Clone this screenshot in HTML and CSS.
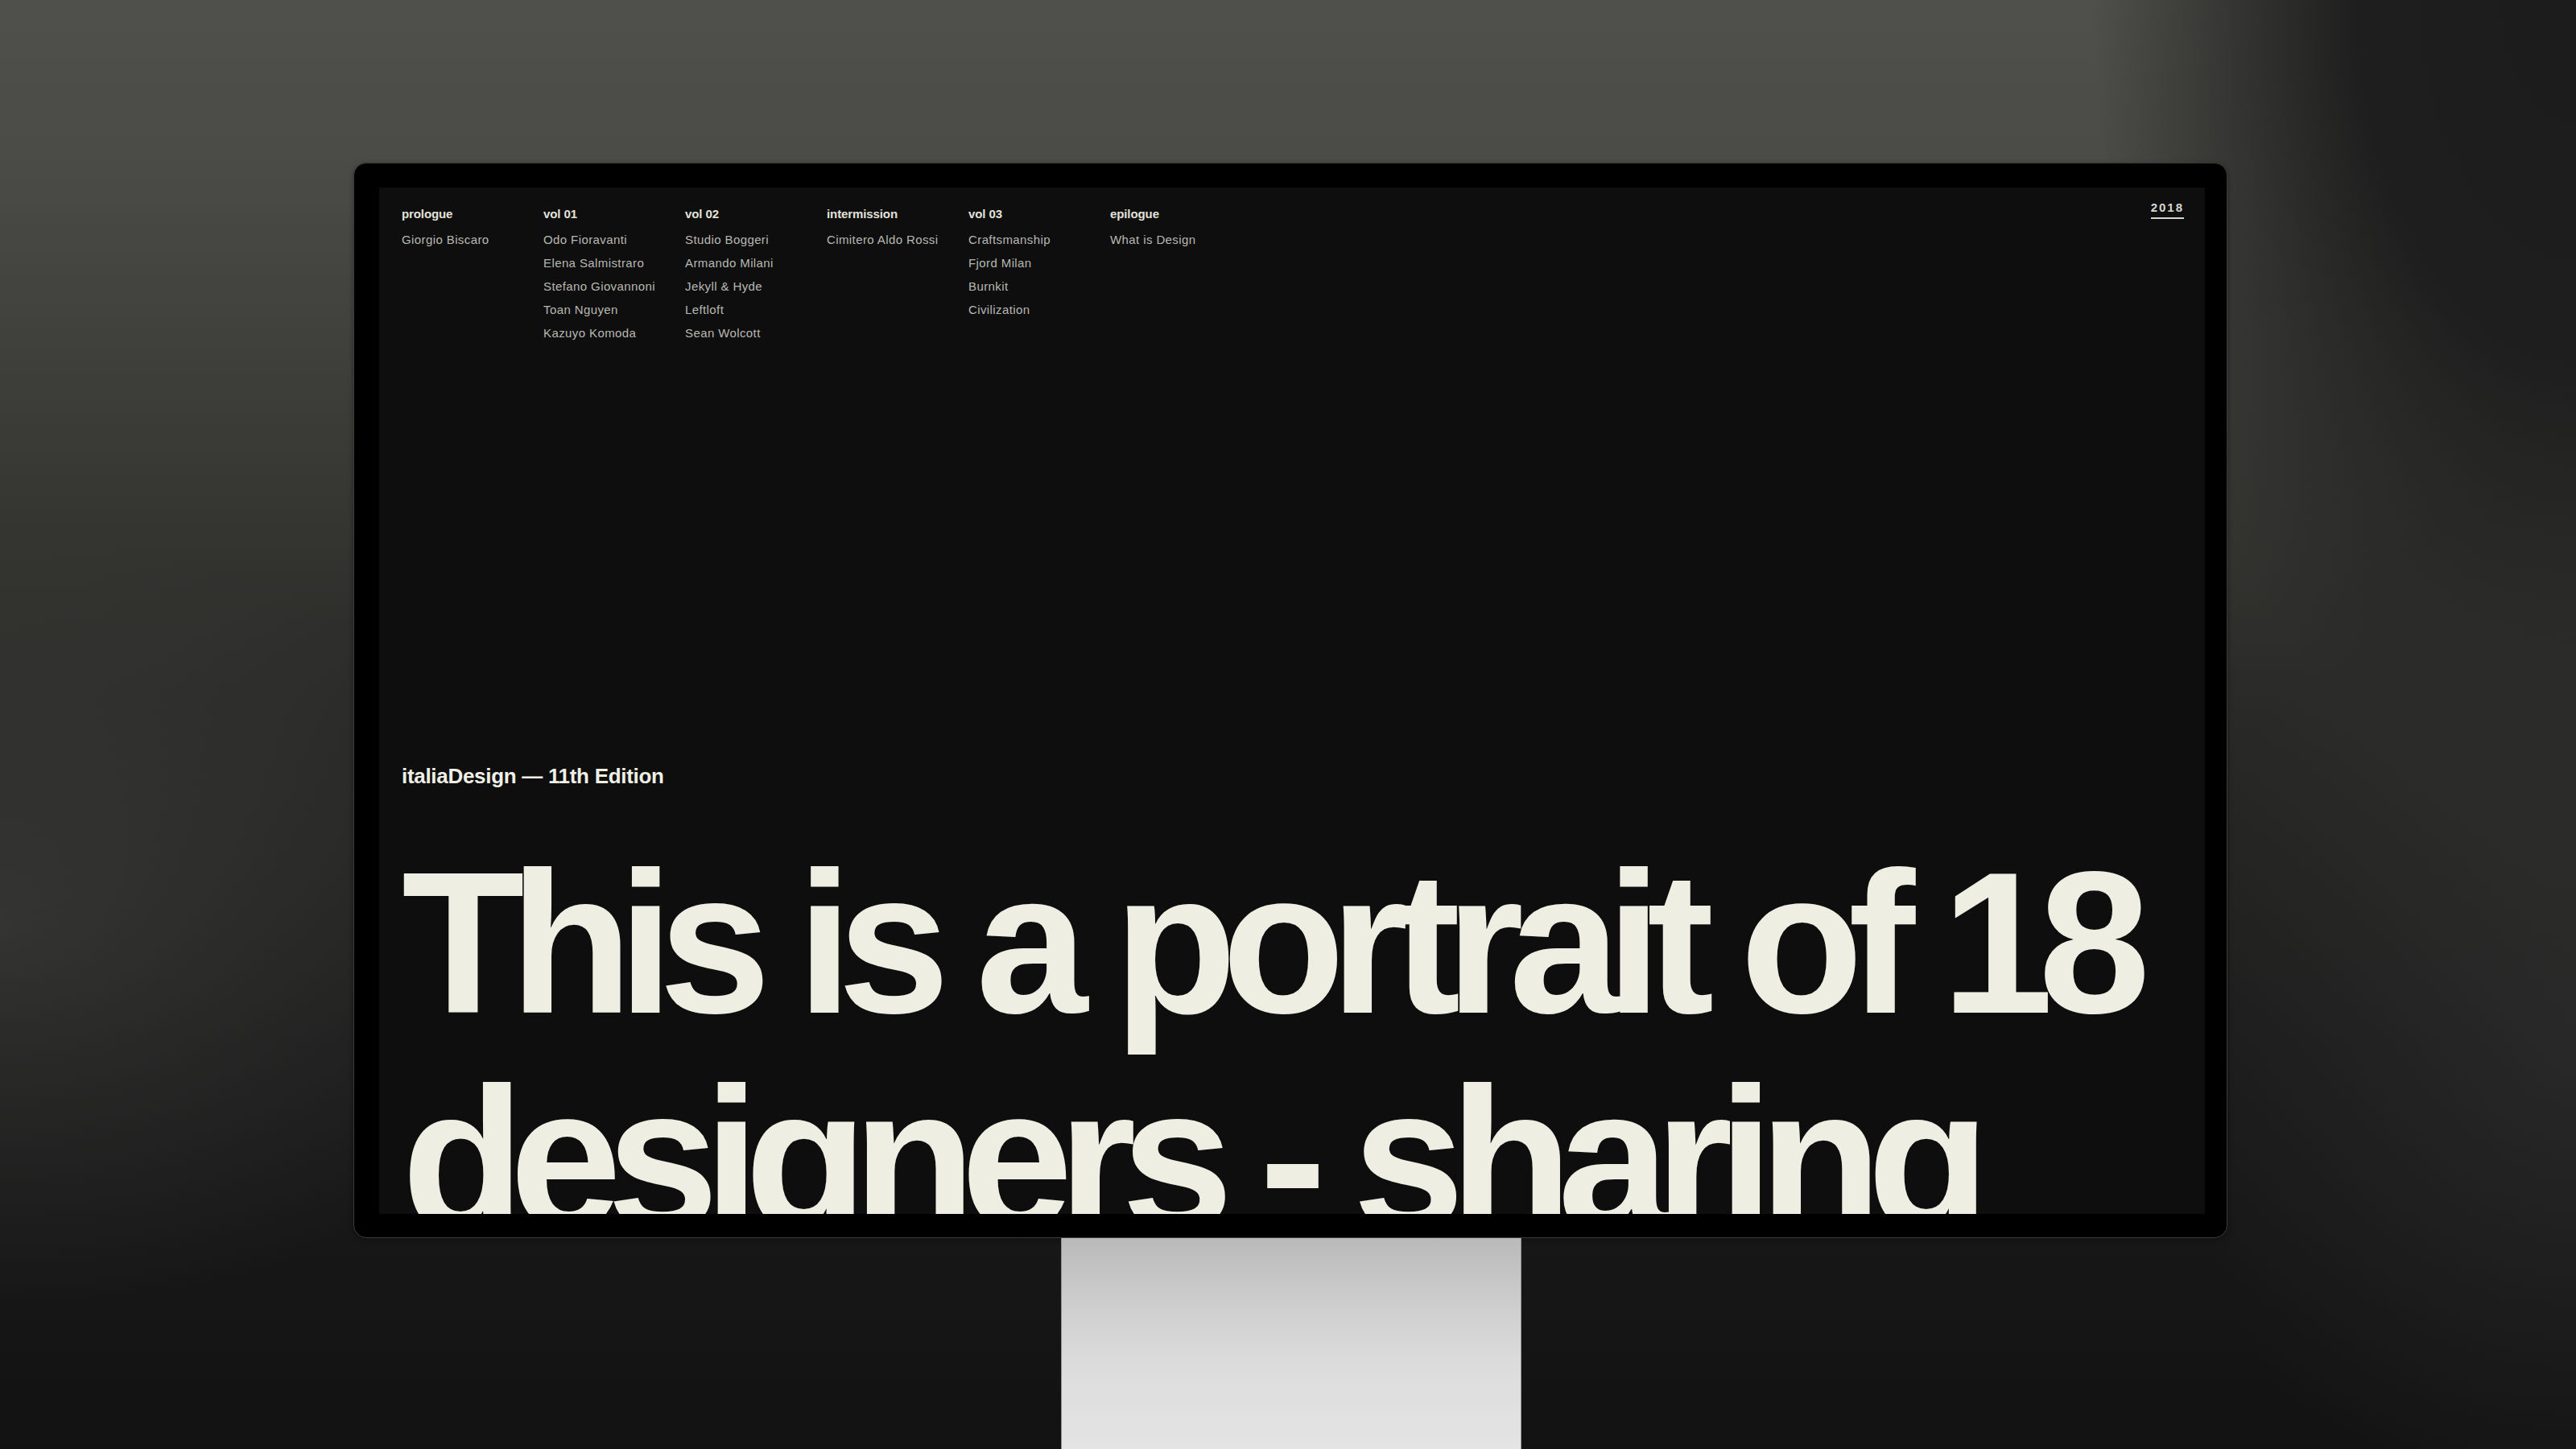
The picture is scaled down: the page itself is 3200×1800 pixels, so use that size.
FILE: index.html
```html
<!DOCTYPE html>
<html lang="en">
<head>
<meta charset="utf-8">
<title>italiaDesign — 11th Edition</title>
<link rel="stylesheet" href="styles.css">
</head>
<body>
<div class="stage">
  <div class="monitor">
    <div class="screen">
      <header class="topbar">
        <nav class="toc">
          <div class="toc-col">
            <h3 class="toc-title">prologue</h3>
            <ul class="toc-list"><li>Giorgio Biscaro</li></ul>
          </div>
          <div class="toc-col">
            <h3 class="toc-title">vol 01</h3>
            <ul class="toc-list">
              <li>Odo Fioravanti</li>
              <li>Elena Salmistraro</li>
              <li>Stefano Giovannoni</li>
              <li>Toan Nguyen</li>
              <li>Kazuyo Komoda</li>
            </ul>
          </div>
          <div class="toc-col">
            <h3 class="toc-title">vol 02</h3>
            <ul class="toc-list">
              <li>Studio Boggeri</li>
              <li>Armando Milani</li>
              <li>Jekyll &amp; Hyde</li>
              <li>Leftloft</li>
              <li>Sean Wolcott</li>
            </ul>
          </div>
          <div class="toc-col">
            <h3 class="toc-title">intermission</h3>
            <ul class="toc-list"><li>Cimitero Aldo Rossi</li></ul>
          </div>
          <div class="toc-col">
            <h3 class="toc-title">vol 03</h3>
            <ul class="toc-list">
              <li>Craftsmanship</li>
              <li>Fjord Milan</li>
              <li>Burnkit</li>
              <li>Civilization</li>
            </ul>
          </div>
          <div class="toc-col">
            <h3 class="toc-title">epilogue</h3>
            <ul class="toc-list"><li>What is Design</li></ul>
          </div>
        </nav>
        <span class="year">2018</span>
      </header>
      <p class="kicker">italiaDesign — 11th Edition</p>
      <h1 class="headline">This is a portrait of 18 designers - sharing</h1>
    </div>
  </div>
  <div class="stand"></div>
</div>
</body>
</html>
```
FILE: styles.css
```css
* { box-sizing: border-box; }

html, body {
  margin: 0;
  padding: 0;
}

body {
  width: 3200px;
  height: 1800px;
  overflow: hidden;
  font-family: "Liberation Sans", Arial, sans-serif;
  background:
    radial-gradient(ellipse 900px 650px at 0% 64%, rgba(95, 95, 92, 0.30), rgba(95, 95, 92, 0) 75%),
    radial-gradient(ellipse 650px 900px at 100% 72%, rgba(85, 85, 85, 0.22), rgba(85, 85, 85, 0) 75%),
    radial-gradient(ellipse 600px 1000px at 100% 0%, #1c1c1c 0%, #1e1e1e 45%, rgba(30, 30, 30, 0) 100%),
    linear-gradient(to bottom, #4f4f4b 0%, #4a4a46 12%, #3a3a37 30%, #2a2a28 48%, #1c1c1c 72%, #121212 100%);
}

.stage {
  display: flex;
  flex-direction: column;
  align-items: flex-start;
  height: 1800px;
  padding: 202px 0 0 439px;
}

.monitor {
  width: 2328px;
  height: 1336px;
  padding: 30px 27px 29px 31px;
  background: #000;
  border: 1px solid #3b3b3b;
  border-radius: 16px;
  box-shadow: 0 2px 6px rgba(0, 0, 0, 0.35);
}

.screen {
  width: 2268px;
  height: 1275px;
  overflow: hidden;
  background: #0e0e0e;
  padding: 18px 26px 0 28px;
}

.topbar {
  display: flex;
  align-items: flex-start;
}

.toc {
  display: flex;
}

.toc-col {
  width: 176px;
}

.toc-title {
  margin: 0 0 3px;
  font-size: 15px;
  line-height: 29px;
  font-weight: 700;
  letter-spacing: -0.1px;
  color: #e2e2da;
}

.toc-list {
  list-style: none;
  margin: 0;
  padding: 0;
}

.toc-list li {
  font-size: 15px;
  line-height: 29px;
  font-weight: 400;
  letter-spacing: 0.4px;
  color: #b8b8b2;
  white-space: nowrap;
}

.year {
  margin-left: auto;
  margin-top: -1px;
  font-size: 15px;
  line-height: 15px;
  font-weight: 700;
  letter-spacing: 2px;
  color: #d6d6ce;
  padding-bottom: 5px;
  border-bottom: 2px solid #d6d6ce;
}

.kicker {
  margin: 520px 0 0;
  font-size: 26px;
  line-height: 32px;
  font-weight: 700;
  letter-spacing: -0.3px;
  color: #efefe5;
}

.headline {
  margin: 58px 0 0;
  font-size: 250px;
  line-height: 268px;
  font-weight: 700;
  letter-spacing: -18.5px;
  color: #eeeee3;
}

.stand {
  flex: 1;
  width: 572px;
  margin-left: 879px;
  background: linear-gradient(to bottom, #b9b9b9 0%, #cdcdcd 30%, #dcdcdc 60%, #e4e4e4 100%);
  border-left: 1px solid #8e8e8e;
  border-right: 1px solid #8e8e8e;
}
```
